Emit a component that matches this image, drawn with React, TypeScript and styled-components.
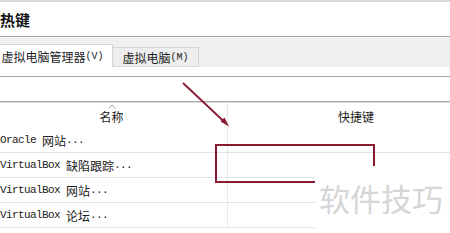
import React from "react";
import styled, { createGlobalStyle } from "styled-components";

const Global = createGlobalStyle`
  html, body { margin: 0; padding: 0; background: #ffffff; overflow: hidden; }
  #root { width: 450px; height: 233px; }
`;

const Window = styled.div`
  position: relative;
  width: 450px;
  height: 233px;
  overflow: hidden;
  background: #ffffff;
  font-family: "Noto Sans CJK SC", "Noto Sans", sans-serif;
  color: #1e1e1e;
`;

const TitleBar = styled.div`
  height: 34px;
  border-top: 2px solid #d9d9d9;
  border-bottom: 1px solid #a3a3a3;
  display: flex;
  align-items: center;
`;

const Title = styled.h1`
  margin: 0;
  font-size: 15px;
  font-weight: 700;
  line-height: 1;
  color: #111;
`;

const TabStrip = styled.div`
  height: 30px;
  box-sizing: border-box;
  background: #f0f0f0;
  border-top: 1px solid #fafafa;
  display: flex;
  align-items: flex-end;
`;

const Tab = styled.div<{ $active?: boolean }>`
  box-sizing: border-box;
  height: ${(p) => (p.$active ? 23 : 20)}px;
  margin-left: ${(p) => (p.$active ? -8 : 0)}px;
  width: ${(p) => (p.$active ? 121 : 86)}px;
  display: flex;
  align-items: center;
  justify-content: center;
  font-size: 12px;
  color: #222;
  background: ${(p) => (p.$active ? "#ffffff" : "#eeeeee")};
  border: 1px solid #d6d6d6;
  border-bottom: ${(p) => (p.$active ? "none" : "1px solid #d6d6d6")};
  border-left: ${(p) => (p.$active ? "1px solid #d6d6d6" : "none")};
  padding-top: ${(p) => (p.$active ? 0 : 1)}px;
`;

const Latin = styled.span`
  font-family: "Liberation Mono", monospace;
  font-size: 10px;
`;

const Panel = styled.div`
  background: #ffffff;
`;

const ToolArea = styled.div`
  height: 9px;
  border-bottom: 1px solid #a3a3a3;
`;

const Blank = styled.div`
  height: 24px;
`;

const Table = styled.div`
  margin-left: -4px;
  width: 488px;
`;

const HeaderRow = styled.div`
  display: grid;
  grid-template-columns: 232px 256px;
  height: 26px;
  border-top: 1px solid #a8a8a8;
  box-shadow: inset 0 1px 0 #dedede;
`;

const HeaderCell = styled.div<{ $divider?: boolean }>`
  position: relative;
  display: flex;
  align-items: center;
  justify-content: center;
  padding-top: 3px;
  font-size: 12px;
  color: #1a1a1a;
  border-right: ${(p) => (p.$divider ? "1px solid #e6e6e6" : "none")};
`;

const SortArrow = styled.svg`
  position: absolute;
  top: 2px;
  left: 50%;
  margin-left: -4px;
`;

const Row = styled.div`
  display: grid;
  grid-template-columns: 232px 256px;
  height: 25px;
  box-sizing: border-box;
  border-bottom: 1px solid #e3e3e3;
`;

const Cell = styled.div<{ $divider?: boolean }>`
  display: flex;
  align-items: center;
  padding-left: 4px;
  font-family: "Liberation Mono", "Noto Sans CJK SC", monospace;
  font-size: 11px;
  letter-spacing: -0.6px;
  color: #202020;
  white-space: pre;
  border-right: ${(p) => (p.$divider ? "1px solid #e9e9e9" : "none")};
`;

const Cjk = styled.span`
  font-family: "Noto Sans CJK SC", sans-serif;
  font-size: 12px;
  letter-spacing: 0;
`;

const Watermark = styled.div`
  position: absolute;
  left: 315px;
  top: 166px;
  width: 135px;
  height: 67px;
  background: #ffffff;
  box-sizing: border-box;
  padding: 14px 0 0 4px;
  font-family: "Noto Sans CJK SC", sans-serif;
  font-size: 31px;
  line-height: 36px;
  color: #d6d6d6;
  white-space: nowrap;
`;

const Overlay = styled.svg`
  position: absolute;
  left: 0;
  top: 0;
  pointer-events: none;
`;

const rows: Array<[string, string]> = [
  ["Oracle ", "网站"],
  ["VirtualBox ", "缺陷跟踪"],
  ["VirtualBox ", "网站"],
  ["VirtualBox ", "论坛"],
];

export default function App() {
  return (
    <>
      <Global />
      <Window>
        <TitleBar>
          <Title>热键</Title>
        </TitleBar>
        <TabStrip>
          <Tab $active>
            虚拟电脑管理器<Latin>(V)</Latin>
          </Tab>
          <Tab>
            虚拟电脑<Latin>(M)</Latin>
          </Tab>
        </TabStrip>
        <Panel>
          <ToolArea />
          <Blank />
          <Table>
            <HeaderRow>
              <HeaderCell $divider>
                <SortArrow width="8" height="5" viewBox="0 0 8 5">
                  <polyline points="0.5,4.5 4,1 7.5,4.5" fill="none" stroke="#a0a0a0" strokeWidth="1" />
                </SortArrow>
                名称
              </HeaderCell>
              <HeaderCell>快捷键</HeaderCell>
            </HeaderRow>
            {rows.map(([a, b], i) => (
              <Row key={i}>
                <Cell $divider>
                  {a}
                  <Cjk>{b}</Cjk>...
                </Cell>
                <Cell />
              </Row>
            ))}
          </Table>
        </Panel>
        <Overlay width="450" height="233" viewBox="0 0 450 233">
          <rect x="216" y="145" width="158" height="37" fill="none" stroke="#8a1a30" strokeWidth="2" />
        </Overlay>
        <Watermark>软件技巧</Watermark>
        <Overlay width="450" height="233" viewBox="0 0 450 233">
          <line x1="183" y1="83" x2="225" y2="122.5" stroke="#8a1a30" strokeWidth="1.8" />
          <polygon points="229,126.5 220.5,121.5 224.5,117.5" fill="#8a1a30" />
        </Overlay>
      </Window>
    </>
  );
}
